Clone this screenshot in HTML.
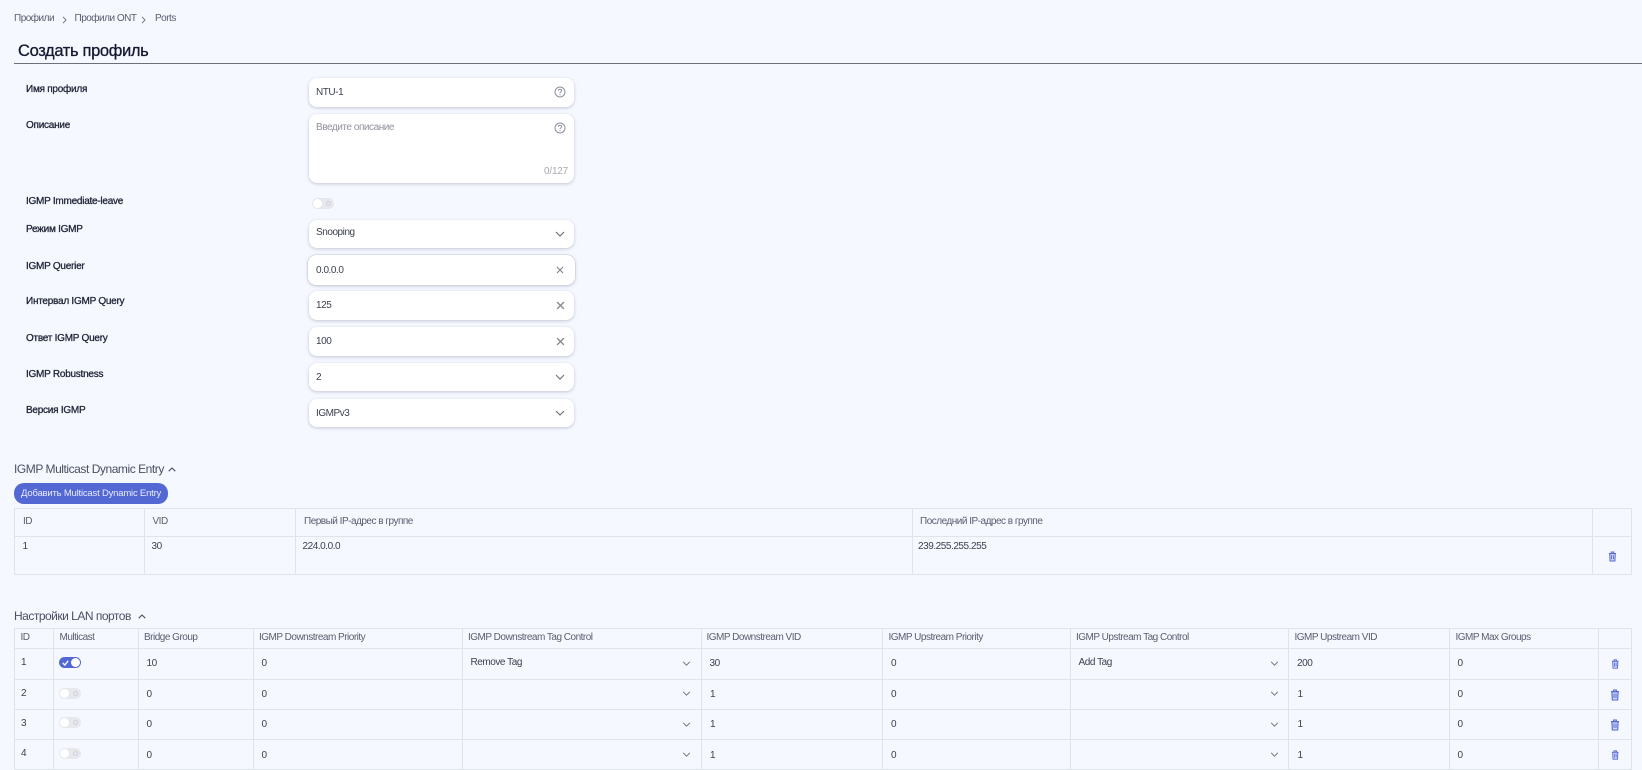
<!DOCTYPE html>
<html lang="ru"><head><meta charset="utf-8"><title>Создать профиль</title>
<style>
html,body{margin:0;padding:0;width:1642px;height:770px;overflow:hidden;background:#f5f8ff;font-family:"Liberation Sans","Noto Sans CJK SC",sans-serif;color:#3d4150}
.t{position:absolute;white-space:nowrap;transform:translateY(-50%);font-size:10px;line-height:14px}
.l{font-size:10px;color:#1f2436;-webkit-text-stroke:.3px #1f2436;letter-spacing:-.25px}
.h{color:#5a5e6e;letter-spacing:-.5px}
.v{font-size:10px;color:#3d4150;letter-spacing:-.45px}
.box{position:absolute;left:309px;width:265px;background:#fff;border-radius:8px;box-shadow:0 1px 3px rgba(60,70,100,.28)}
.hl{position:absolute;background:#dfe3ea;height:1px}
.vl{position:absolute;background:#dfe3ea;width:1px}
svg.i{position:absolute;overflow:visible}
.tg{position:absolute;width:22px;height:11px;border-radius:6px;background:#e6e8ed}
.tg:before{content:"";position:absolute;left:1px;top:1px;width:9px;height:9px;border-radius:50%;background:#fff}
.tg:after{content:"";position:absolute;right:3px;top:3px;width:3px;height:3px;border-radius:50%;border:1px solid #cfd2d9;box-sizing:content-box}
.on{background:#5468d4}
.on:before{left:12px}
.on:after{display:none}
</style></head><body>
<svg width="0" height="0" style="position:absolute"><defs>
<symbol id="q" viewBox="0 0 12 12"><circle cx="6" cy="6" r="5" fill="none" stroke="#8e919e" stroke-width="1"/><path d="M4.4 4.7C4.5 3.8 5.2 3.3 6 3.3c.9 0 1.6.6 1.6 1.4 0 1.2-1.6 1.2-1.6 2.4" fill="none" stroke="#8e919e"/><circle cx="6" cy="8.7" r=".6" fill="#8e919e"/></symbol>
<symbol id="c" viewBox="0 0 10 6"><path d="M1 1l4 4 4-4" fill="none" stroke="#71747f" stroke-width="1.2"/></symbol>
<symbol id="x" viewBox="0 0 8 8"><path d="M1 1l6 6M7 1L1 7" fill="none" stroke="#85878f" stroke-width="1.2"/></symbol>
<symbol id="d" viewBox="0 0 10 12"><path d="M1 2.6h8M3.6 2.4V1h2.8v1.4M1.9 2.8l.4 8.2h5.4l.4-8.2z" fill="#d5daf6" stroke="#5468d4" stroke-width="1.1"/><path d="M4 4.5v4.5M6 4.5v4.5" stroke="#5468d4"/></symbol>
</defs></svg>

<div class="t h" style="left:14px;top:18.5px">Профили</div>
<svg class="i" style="left:62px;top:16px" width="5" height="8" viewBox="0 0 5 8"><path d="M1 .8L4 4 1 7.2" fill="none" stroke="#777b88"/></svg>
<div class="t h" style="left:74.5px;top:18.5px">Профили ONT</div>
<svg class="i" style="left:141px;top:16px" width="5" height="8" viewBox="0 0 5 8"><path d="M1 .8L4 4 1 7.2" fill="none" stroke="#777b88"/></svg>
<div class="t h" style="left:155px;top:18.5px">Ports</div>
<div class="t" style="left:18px;top:50.5px;font-size:16.5px;line-height:20px;color:#14192e;-webkit-text-stroke:.3px #14192e;letter-spacing:-.35px">Создать профиль</div>
<div class="hl" style="left:14px;top:63px;width:1628px;background:#6d7079"></div>

<div class="t l" style="left:26px;top:89.5px">Имя профиля</div>
<div class="box" style="top:78px;height:29px"></div>
<div class="t v" style="left:316px;top:92.5px">NTU-1</div>
<svg class="i" style="left:554px;top:86px" width="12" height="12"><use href="#q"/></svg>

<div class="t l" style="left:26px;top:125.5px">Описание</div>
<div class="box" style="top:114px;height:69px"></div>
<div class="t" style="left:316px;top:128px;color:#8f929c;letter-spacing:-.45px">Введите описание</div>
<svg class="i" style="left:554px;top:122px" width="12" height="12"><use href="#q"/></svg>
<div class="t" style="left:544px;top:172px;color:#a8aab2;letter-spacing:-.2px">0/127</div>

<div class="t l" style="left:26px;top:202px">IGMP Immediate-leave</div>
<div class="tg" style="left:311.5px;top:198px"></div>

<div class="t l" style="left:26px;top:230px">Режим IGMP</div>
<div class="box" style="top:220px;height:28px"></div>
<div class="t v" style="left:316px;top:233px">Snooping</div>
<svg class="i" style="left:555px;top:231px" width="10" height="6"><use href="#c"/></svg>

<div class="t l" style="left:26px;top:266.5px">IGMP Querier</div>
<div class="box" style="left:308px;width:267px;top:255px;height:30px;box-shadow:0 0 0 .5px #c9ccd6,0 1px 3px rgba(60,70,100,.3)"></div>
<div class="t v" style="left:316px;top:270.5px">0.0.0.0</div>
<svg class="i" style="left:556px;top:266px" width="8" height="8"><use href="#x"/></svg>

<div class="t l" style="left:26px;top:301.5px">Интервал IGMP Query</div>
<div class="box" style="top:291px;height:29px"></div>
<div class="t v" style="left:316px;top:305.5px">125</div>
<svg class="i" style="left:555.5px;top:301px" width="9" height="9"><use href="#x"/></svg>

<div class="t l" style="left:26px;top:338.5px">Ответ IGMP Query</div>
<div class="box" style="top:327px;height:29px"></div>
<div class="t v" style="left:316px;top:342px">100</div>
<svg class="i" style="left:555.5px;top:337px" width="9" height="9"><use href="#x"/></svg>

<div class="t l" style="left:26px;top:374.5px">IGMP Robustness</div>
<div class="box" style="top:363px;height:28px"></div>
<div class="t v" style="left:316px;top:378px">2</div>
<svg class="i" style="left:555px;top:374px" width="10" height="6"><use href="#c"/></svg>

<div class="t l" style="left:26px;top:410.5px">Версия IGMP</div>
<div class="box" style="top:399px;height:28px"></div>
<div class="t v" style="left:316px;top:413.5px">IGMPv3</div>
<svg class="i" style="left:555px;top:410px" width="10" height="6"><use href="#c"/></svg>

<div class="t" style="left:14px;top:469px;font-size:12px;color:#4a4f60;letter-spacing:-.45px">IGMP Multicast Dynamic Entry</div>
<svg class="i" style="left:168px;top:467px" width="8" height="5" viewBox="0 0 8 5"><path d="M.7 4.2L4 1l3.3 3.2" fill="none" stroke="#4a4f60" stroke-width="1.1"/></svg>
<div style="position:absolute;left:14px;top:483px;width:154px;height:21px;border-radius:10px;background:#5468d4"></div>
<div class="t" style="left:21px;top:493.5px;color:#e8ebff;font-size:9.5px;letter-spacing:-.2px">Добавить Multicast Dynamic Entry</div>

<div class="hl" style="left:14px;top:508px;width:1618px"></div>
<div class="hl" style="left:14px;top:536px;width:1618px"></div>
<div class="hl" style="left:14px;top:574px;width:1618px"></div>
<div class="vl" style="left:14px;top:508px;height:67px"></div>
<div class="vl" style="left:144px;top:508px;height:67px"></div>
<div class="vl" style="left:295px;top:508px;height:67px"></div>
<div class="vl" style="left:912px;top:508px;height:67px"></div>
<div class="vl" style="left:1592px;top:508px;height:67px"></div>
<div class="vl" style="left:1631px;top:508px;height:67px"></div>
<div class="t h" style="left:23px;top:522px">ID</div>
<div class="t h" style="left:152.5px;top:522px">VID</div>
<div class="t h" style="left:304px;top:522px">Первый IP-адрес в группе</div>
<div class="t h" style="left:920px;top:522px">Последний IP-адрес в группе</div>
<div class="t v" style="left:22.5px;top:547px">1</div>
<div class="t v" style="left:151.5px;top:547px">30</div>
<div class="t v" style="left:302.5px;top:547px">224.0.0.0</div>
<div class="t v" style="left:918px;top:547px">239.255.255.255</div>
<svg class="i" style="left:1607.5px;top:550.5px" width="9" height="11"><use href="#d"/></svg>

<div class="t" style="left:14px;top:616px;font-size:12px;color:#4a4f60;letter-spacing:-.5px">Настройки LAN портов</div>
<svg class="i" style="left:137.5px;top:614px" width="8" height="5" viewBox="0 0 8 5"><path d="M.7 4.2L4 1l3.3 3.2" fill="none" stroke="#4a4f60" stroke-width="1.1"/></svg>

<div class="hl" style="left:14px;top:628px;width:1618px"></div>
<div class="hl" style="left:14px;top:648px;width:1618px"></div>
<div class="hl" style="left:14px;top:679px;width:1618px"></div>
<div class="hl" style="left:14px;top:709px;width:1618px"></div>
<div class="hl" style="left:14px;top:739px;width:1618px"></div>
<div class="hl" style="left:14px;top:769px;width:1618px"></div>
<div class="vl" style="left:14px;top:628px;height:142px"></div>
<div class="vl" style="left:53px;top:628px;height:142px"></div>
<div class="vl" style="left:138px;top:628px;height:142px"></div>
<div class="vl" style="left:253px;top:628px;height:142px"></div>
<div class="vl" style="left:462px;top:628px;height:142px"></div>
<div class="vl" style="left:701px;top:628px;height:142px"></div>
<div class="vl" style="left:882px;top:628px;height:142px"></div>
<div class="vl" style="left:1070px;top:628px;height:142px"></div>
<div class="vl" style="left:1288px;top:628px;height:142px"></div>
<div class="vl" style="left:1449px;top:628px;height:142px"></div>
<div class="vl" style="left:1598px;top:628px;height:142px"></div>
<div class="vl" style="left:1631px;top:628px;height:142px"></div>

<div class="t h" style="left:20.5px;top:638px">ID</div>
<div class="t h" style="left:59.5px;top:638px">Multicast</div>
<div class="t h" style="left:144px;top:638px">Bridge Group</div>
<div class="t h" style="left:259px;top:638px">IGMP Downstream Priority</div>
<div class="t h" style="left:468px;top:638px">IGMP Downstream Tag Control</div>
<div class="t h" style="left:706.5px;top:638px">IGMP Downstream VID</div>
<div class="t h" style="left:888.5px;top:638px">IGMP Upstream Priority</div>
<div class="t h" style="left:1076px;top:638px">IGMP Upstream Tag Control</div>
<div class="t h" style="left:1294.5px;top:638px">IGMP Upstream VID</div>
<div class="t h" style="left:1455.5px;top:638px">IGMP Max Groups</div>

<div class="t v" style="left:21px;top:662.5px">1</div>
<div class="tg on" style="left:59px;top:657px"></div>
<svg class="i" style="left:62px;top:659.5px" width="7" height="6" viewBox="0 0 7 6"><path d="M.8 3l2 2L6.2.8" fill="none" stroke="#fff" stroke-width="1.3"/></svg>
<div class="t v" style="left:146.5px;top:663.5px">10</div>
<div class="t v" style="left:261.5px;top:663.5px">0</div>
<div class="t v" style="left:470.5px;top:663px">Remove Tag</div>
<svg class="i" style="left:681.5px;top:661px" width="9" height="5"><use href="#c"/></svg>
<div class="t v" style="left:709.5px;top:663.5px">30</div>
<div class="t v" style="left:891px;top:663.5px">0</div>
<div class="t v" style="left:1078.5px;top:663px">Add Tag</div>
<svg class="i" style="left:1269.5px;top:661px" width="9" height="5"><use href="#c"/></svg>
<div class="t v" style="left:1297px;top:663.5px">200</div>
<div class="t v" style="left:1457.5px;top:663.5px">0</div>
<svg class="i" style="left:1610.5px;top:659px" width="8.5" height="10"><use href="#d"/></svg>

<div class="t v" style="left:21px;top:693.5px">2</div>
<div class="tg" style="left:59px;top:687.5px"></div>
<div class="t v" style="left:146.5px;top:694.5px">0</div>
<div class="t v" style="left:261.5px;top:694.5px">0</div>
<svg class="i" style="left:681.5px;top:691px" width="9" height="5"><use href="#c"/></svg>
<div class="t v" style="left:710px;top:694.5px">1</div>
<div class="t v" style="left:891px;top:694.5px">0</div>
<svg class="i" style="left:1269.5px;top:691px" width="9" height="5"><use href="#c"/></svg>
<div class="t v" style="left:1297.5px;top:694.5px">1</div>
<div class="t v" style="left:1457.5px;top:694.5px">0</div>
<svg class="i" style="left:1609.5px;top:688.5px" width="10" height="12"><use href="#d"/></svg>

<div class="t v" style="left:21px;top:723.5px">3</div>
<div class="tg" style="left:59px;top:717px"></div>
<div class="t v" style="left:146.5px;top:724.5px">0</div>
<div class="t v" style="left:261.5px;top:724.5px">0</div>
<svg class="i" style="left:681.5px;top:722px" width="9" height="5"><use href="#c"/></svg>
<div class="t v" style="left:710px;top:724.5px">1</div>
<div class="t v" style="left:891px;top:724.5px">0</div>
<svg class="i" style="left:1269.5px;top:722px" width="9" height="5"><use href="#c"/></svg>
<div class="t v" style="left:1297.5px;top:724.5px">1</div>
<div class="t v" style="left:1457.5px;top:724.5px">0</div>
<svg class="i" style="left:1609.5px;top:719px" width="10" height="12"><use href="#d"/></svg>

<div class="t v" style="left:21px;top:753.5px">4</div>
<div class="tg" style="left:59px;top:748px"></div>
<div class="t v" style="left:146.5px;top:755.5px">0</div>
<div class="t v" style="left:261.5px;top:755.5px">0</div>
<svg class="i" style="left:681.5px;top:752px" width="9" height="5"><use href="#c"/></svg>
<div class="t v" style="left:710px;top:755.5px">1</div>
<div class="t v" style="left:891px;top:755.5px">0</div>
<svg class="i" style="left:1269.5px;top:752px" width="9" height="5"><use href="#c"/></svg>
<div class="t v" style="left:1297.5px;top:755.5px">1</div>
<div class="t v" style="left:1457.5px;top:755.5px">0</div>
<svg class="i" style="left:1610.5px;top:750px" width="8.5" height="10"><use href="#d"/></svg>
</body></html>
